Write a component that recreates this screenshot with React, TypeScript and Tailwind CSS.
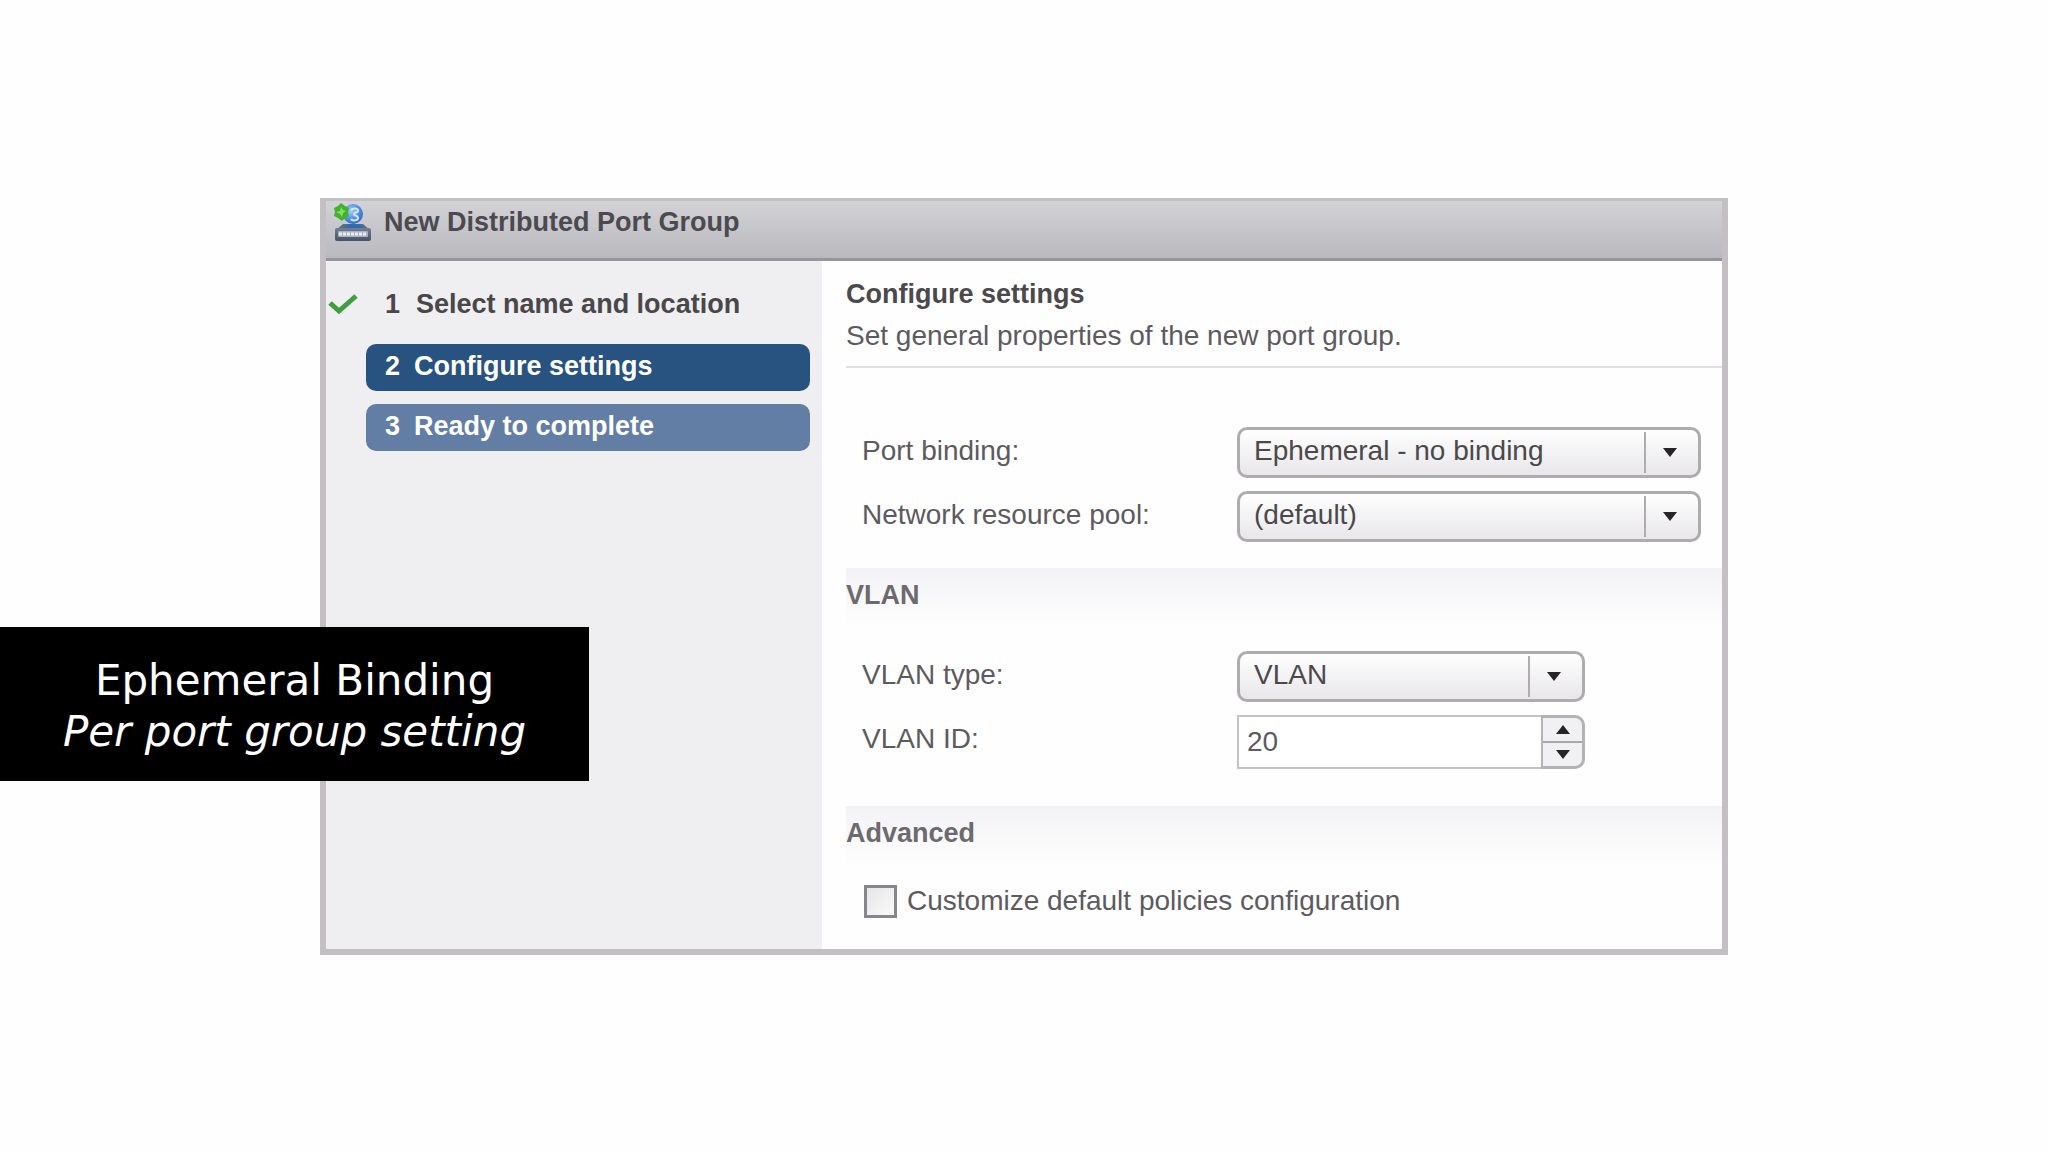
import { useState, type ReactNode } from "react";

function PortGroupIcon() {
  return (
    <svg viewBox="0 0 38 40" className="h-10 w-[38px] shrink-0" aria-hidden="true">
      <defs>
        <radialGradient id="globe" cx="0.4" cy="0.35" r="0.7">
          <stop offset="0" stopColor="#a9cdf8" />
          <stop offset="0.6" stopColor="#4f8fe2" />
          <stop offset="1" stopColor="#2f68c0" />
        </radialGradient>
        <linearGradient id="switch" x1="0" y1="0" x2="0" y2="1">
          <stop offset="0" stopColor="#6f7f95" />
          <stop offset="1" stopColor="#465266" />
        </linearGradient>
      </defs>
      <path d="M9 22h20l8 7H1z" fill="#5a6b86" />
      <path d="M12 24c4-3 12-3 16 0l3 3H9z" fill="#2f6cb0" />
      <rect x="1" y="26" width="36" height="13" rx="2" fill="url(#switch)" />
      <rect x="4" y="29" width="30" height="6" rx="1" fill="#aab2be" />
      <path d="M5 32h28" stroke="#e9edf2" strokeWidth="3" strokeDasharray="3 1" />
      <circle cx="19" cy="12" r="10" fill="url(#globe)" />
      <path d="M17 8c3-3 8-1 7 1s-4 1-4 3 4 1 4 4-6 3-7 1" fill="none" stroke="#d6e9fc" strokeWidth="2" />
      <path d="M7 1l4 3 4 2-1 5 1 3-4 2-3 3-4-3-4-2 1-4-1-4 4-2z" fill="#41b32a" />
      <path d="M7 5l2 3 3 1-3 2-1 4-2-3-4-2 4-1z" fill="#86dd62" />
    </svg>
  );
}

function CheckMark() {
  return (
    <svg viewBox="0 0 32 24" className="h-6 w-8 shrink-0" role="img" aria-label="Completed">
      <path d="M4 11l9 8L30 4" fill="none" stroke="#3f9f3c" strokeWidth="5" />
    </svg>
  );
}

function Triangle({ up = false }: { up?: boolean }) {
  return (
    <svg viewBox="0 0 14 9" className="h-[9px] w-3.5" aria-hidden="true">
      <path d={up ? "M0 9h14L7 0z" : "M0 0h14L7 9z"} fill="#262427" />
    </svg>
  );
}

function Field({ id, label, children }: { id: string; label: string; children: ReactNode }) {
  return (
    <div className="flex items-start">
      <label htmlFor={id} className="w-[375px] shrink-0 pt-2 text-[#5d5b5f]">
        {label}
      </label>
      {children}
    </div>
  );
}

function Dropdown({ id, options, wide = false }: { id: string; options: string[]; wide?: boolean }) {
  return (
    <div className={wide ? "relative w-[464px]" : "relative w-[348px]"}>
      <select
        id={id}
        className="block h-[51px] w-full appearance-none rounded-[10px] border-[3px] border-[#aeacaf] bg-linear-to-b from-white to-[#e8e6e9] pb-0.5 pl-3.5 text-[#4b494c]"
      >
        {options.map((o) => (
          <option key={o}>{o}</option>
        ))}
      </select>
      <span className="pointer-events-none absolute inset-y-[5px] right-[3px] flex w-[54px] items-center justify-center border-l-2 border-[#aeacaf] pr-1">
        <Triangle />
      </span>
    </div>
  );
}

function SectionBand({ children }: { children: ReactNode }) {
  return (
    <h3 className="h-[60px] bg-linear-to-b from-[#f3f2f5] to-[#fefefe] pt-[11px] text-[27px] font-bold text-[#6c6a6e]">
      {children}
    </h3>
  );
}

export default function App() {
  const [vlanId, setVlanId] = useState(20);
  const [custom, setCustom] = useState(false);

  return (
    <main className="relative flex min-h-screen items-center justify-center bg-[#fefefe] font-['Liberation_Sans',Arial,sans-serif] text-[28px] leading-8">
      <section className="w-11/16 border-[6px] border-t-[3px] border-[#c2c0c3]" aria-labelledby="dialog-title">
        <header className="flex h-[60px] items-start gap-3 border-b-[3px] border-[#96959c] bg-linear-to-b from-[#d3d2d5] to-[#b9b8be] pl-2 pt-px">
          <PortGroupIcon />
          <h1 id="dialog-title" className="pt-1 text-[27px] font-bold text-[#4b4a50]">
            New Distributed Port Group
          </h1>
        </header>

        <div className="flex">
          <nav className="w-[496px] shrink-0 bg-[#efeef0] text-[27px] font-bold" aria-label="Wizard steps">
            <ol className="flex flex-col pr-3 pt-5">
              <li className="flex items-center">
                <CheckMark />
                <button type="button" className="ml-2 flex h-[47px] flex-1 items-center gap-4 pl-[19px] text-left text-[#49474a]">
                  <span>1</span>Select name and location
                </button>
              </li>
              <li className="mt-4 pl-10">
                <button type="button" aria-current="step" className="flex h-[47px] w-full items-center gap-3.5 rounded-[10px] bg-[#28527f] pb-0.5 pl-[19px] text-white">
                  <span>2</span>Configure settings
                </button>
              </li>
              <li className="mt-[13px] pl-10">
                <button type="button" className="flex h-[47px] w-full items-center gap-3.5 rounded-[10px] bg-[#637ea5] pb-0.5 pl-[19px] text-white">
                  <span>3</span>Ready to complete
                </button>
              </li>
            </ol>
          </nav>

          <div className="flex-1 bg-[#fefefe] pb-[31px] pl-6">
            <div className="border-b-2 border-[#e0dfe1] pb-3.5 pt-[17px]">
              <h2 className="text-[27px] font-bold text-[#4b494c]">Configure settings</h2>
              <p className="mt-2.5 text-[#5d5b5f]">Set general properties of the new port group.</p>
            </div>

            <div className="flex flex-col gap-[13px] pb-[26px] pl-4 pt-[59px]">
              <Field id="binding" label="Port binding:">
                <Dropdown id="binding" wide options={["Ephemeral - no binding", "Static binding", "Dynamic binding"]} />
              </Field>
              <Field id="pool" label="Network resource pool:">
                <Dropdown id="pool" wide options={["(default)"]} />
              </Field>
            </div>

            <SectionBand>VLAN</SectionBand>
            <div className="flex flex-col gap-[13px] pb-[37px] pl-4 pt-[23px]">
              <Field id="vlan-type" label="VLAN type:">
                <Dropdown id="vlan-type" options={["VLAN", "None", "VLAN trunking"]} />
              </Field>
              <Field id="vlan-id" label="VLAN ID:">
                <div className="flex h-[54px] w-[348px]">
                  <input
                    id="vlan-id"
                    type="text"
                    inputMode="numeric"
                    value={vlanId}
                    onChange={(e) => setVlanId(Number(e.target.value) || 0)}
                    className="min-w-0 flex-1 border-2 border-r-0 border-[#c4c2c5] bg-white pl-2 text-[#5d5b5f]"
                  />
                  <div className="flex w-11 flex-col overflow-hidden rounded-r-[10px] border-[3px] border-l-2 border-[#b4b2b5] bg-[#f1f0f2]">
                    <button type="button" aria-label="Increase VLAN ID" onClick={() => setVlanId(vlanId + 1)} className="flex flex-1 items-center justify-center border-b-2 border-[#a9a7aa]">
                      <Triangle up />
                    </button>
                    <button type="button" aria-label="Decrease VLAN ID" onClick={() => setVlanId(Math.max(0, vlanId - 1))} className="flex flex-1 items-center justify-center">
                      <Triangle />
                    </button>
                  </div>
                </div>
              </Field>
            </div>

            <SectionBand>Advanced</SectionBand>
            <div className="flex items-center gap-2.5 pl-[18px] pt-[19px]">
              <input
                id="custom"
                type="checkbox"
                checked={custom}
                onChange={(e) => setCustom(e.target.checked)}
                className="size-[33px] appearance-none border-[3px] border-[#88868a] bg-linear-to-br from-[#e6e5e7] to-[#fafafa] checked:bg-[#637ea5]"
              />
              <label htmlFor="custom" className="text-[#5d5b5f]">
                Customize default policies configuration
              </label>
            </div>
          </div>
        </div>
      </section>

      <aside className="absolute left-0 top-[627px] w-[589px] bg-black pb-6 pt-7 text-center font-['DejaVu_Sans',Verdana,sans-serif] text-[42px] leading-[51px] text-white">
        <p>Ephemeral Binding</p>
        <p className="italic">Per port group setting</p>
      </aside>
    </main>
  );
}
